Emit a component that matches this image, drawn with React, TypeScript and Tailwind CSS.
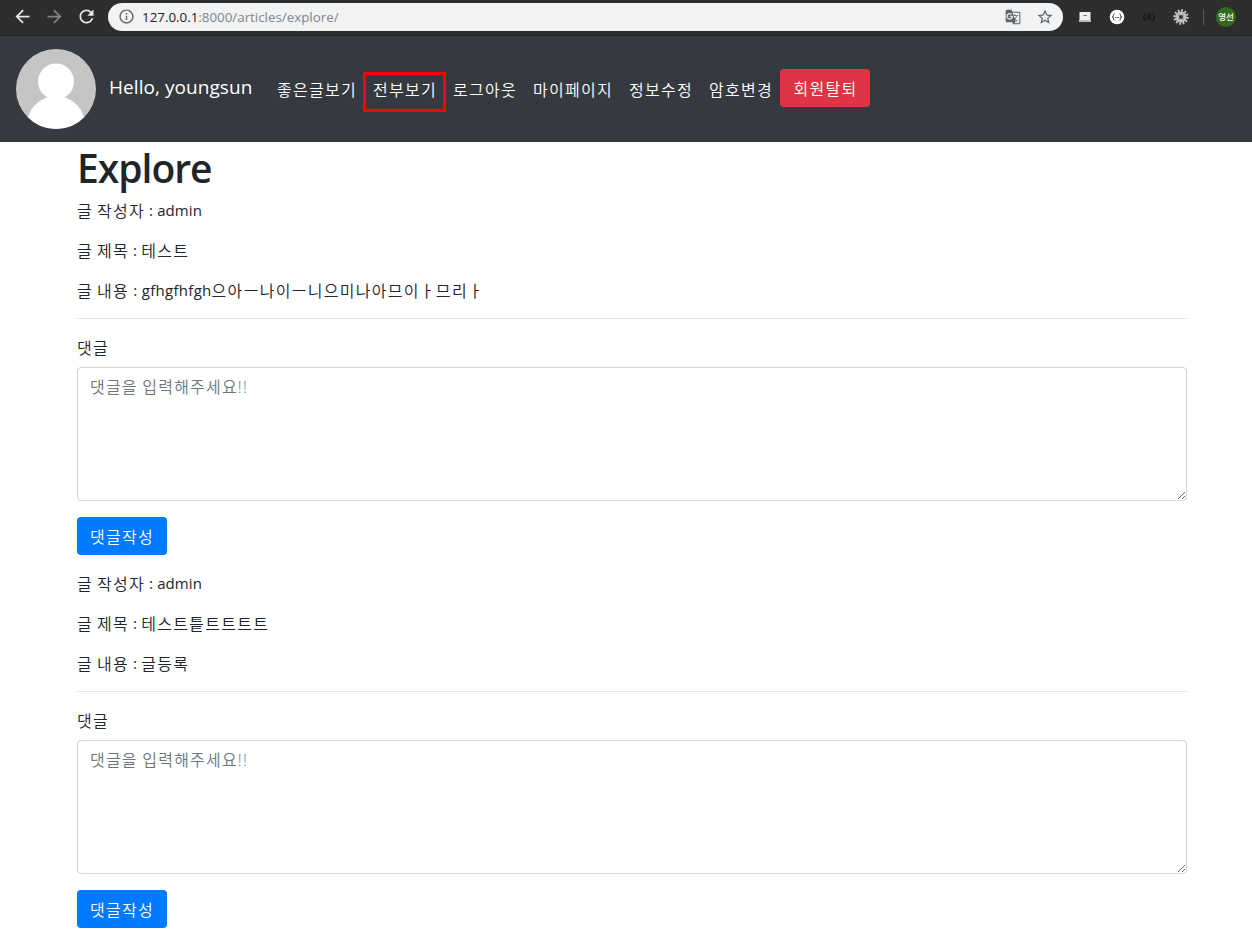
import React from "react";
import { MdArrowBack, MdArrowForward, MdRefresh, MdInfoOutline, MdStarBorder, MdGTranslate } from "react-icons/md";

const HANGUL = /([\u3131-\u318e\uac00-\ud7a3]+)/;

function Mixed({ text }: { text: string }) {
  return (
    <>
      {text.split(HANGUL).map((part, i) =>
        HANGUL.test(part) ? (
          <span key={i} className="relative top-px font-[350] tracking-[1.3px]">{part}</span>
        ) : (
          <span key={i} className={part.length > 8 ? "whitespace-pre text-[15px] tracking-[0.3px]" : "whitespace-pre text-[15px] tracking-[0.1px]"}>{part}</span>
        ),
      )}
    </>
  );
}

function BrowserBar() {
  return (
    <div className="flex h-9 items-center border-b border-[#202020] bg-[#2d2d2d] pb-0.5">
      <MdArrowBack className="ml-[11.5px] size-[21px] text-[#e6e6e6]" />
      <MdArrowForward className="ml-[11px] size-[21px] text-[#858585]" />
      <MdRefresh className="ml-[11px] size-[21px] text-[#e6e6e6]" />
      <div className="ml-[11.5px] flex h-7 w-[955px] items-center rounded-full bg-[#f1f3f4] px-2.5">
        <MdInfoOutline className="size-[17px] text-[#5f6368]" />
        <div className="ml-[7px] text-[13.35px] leading-5 text-[#80868b]">
          <span className="text-[#202124]">127.0.0.1</span>:8000/articles/explore/
        </div>
        <MdGTranslate className="ml-auto size-4 text-[#5f6368]" />
        <MdStarBorder className="-mr-px ml-[15px] size-[18px] text-[#5f6368]" />
      </div>
      <svg className="ml-4 h-3 w-3" viewBox="0 0 12 12">
        <path fill="#f0f0f0" d="M.5 1h11v8H.5z" />
        <path fill="#bcbcbc" d="M0 9h12v2H0z" />
        <path stroke="#444" d="M4.5 4.5h1M6 4.5h1.5" />
      </svg>
      <svg className="ml-[18px] size-4" viewBox="0 0 16 16">
        <circle cx="8" cy="8" r="7.3" fill="#fff" />
        <path d="M5.5 5Q4.3 5 4.5 6.5 4.5 8 3.2 8 4.5 8 4.5 9.5 4.3 11 5.5 11M10.5 5Q11.7 5 11.5 6.5 11.5 8 12.8 8 11.5 8 11.5 9.5 11.7 11 10.5 11M6 8.5h1M7.6 8.5h1M9.2 8.5h1" fill="none" stroke="#333" />
      </svg>
      <svg className="ml-4 size-4" viewBox="0 0 16 16">
        <path d="M4.5 4.5Q3.2 4.5 3.2 6.5 3.2 8 2 8 3.2 8 3.2 9.5 3.2 11.5 4.5 11.5M11.5 4.5Q12.8 4.5 12.8 6.5 12.8 8 14 8 12.8 8 12.8 9.5 12.8 11.5 11.5 11.5M5.7 6h4.6M5.7 8h4.6M5.7 10h4.6" fill="none" stroke="#111" strokeWidth="1.2" />
      </svg>
      <svg className="ml-4 size-4" viewBox="0 0 16 16">
        <circle cx="8" cy="8" r="6.6" fill="none" stroke="#c7c7c7" strokeWidth="2.2" strokeDasharray="1.75 1.7" />
        <circle cx="8" cy="8" r="4.4" fill="none" stroke="#bfbfbf" strokeWidth="2.8" />
        <circle cx="8" cy="8" r="2.6" fill="#3a3a3a" stroke="#eee" strokeWidth=".8" />
      </svg>
      <div className="ml-3.5 h-4 w-px bg-[#5c5c5c]" />
      <div className="ml-3 flex size-5 items-center justify-center rounded-full bg-[#33691e] pt-0.5 text-[8.5px] font-medium leading-none text-white">
        영선
      </div>
    </div>
  );
}

const accountLinks = ["로그아웃", "마이페이지", "정보수정", "암호변경"];

function Navbar() {
  return (
    <nav className="flex h-[106px] items-center bg-[#343a40] px-4 text-white">
      <svg className="size-20 shrink-0" viewBox="0 0 80 80">
        <clipPath id="avatar"><circle cx="40" cy="40" r="40" /></clipPath>
        <g clipPath="url(#avatar)">
          <path fill="#c5c5c5" d="M0 0h80v80H0z" />
          <circle cx="40" cy="32.5" r="18" fill="#fff" />
          <circle cx="40" cy="76" r="29" fill="#fff" />
        </g>
      </svg>
      <span className="ml-[13px] w-[168px] pb-1 text-[19px] leading-[30px] tracking-[0.06px] whitespace-nowrap">Hello, youngsun</span>
      <a className="w-[79px] whitespace-nowrap pt-0.5 font-[350] tracking-[1.28px]">좋은글보기</a>
      <a className="ml-[7px] mt-[5px] flex h-10 w-[83px] items-center border-3 border-[#ff0000] pb-[3px] pl-[7px] font-[350] tracking-[1.28px] whitespace-nowrap">전부보기</a>
      <div className="ml-[7px] flex gap-4 pt-0.5">
        {accountLinks.map((t) => (
          <a key={t} className="whitespace-nowrap font-[350] tracking-[1.28px]">{t}</a>
        ))}
      </div>
      <button className="mb-0.5 ml-[7px] h-[38px] w-[90px] rounded bg-[#dc3545] pl-px pt-0.5 font-[350] tracking-[1.28px]">회원탈퇴</button>
    </nav>
  );
}

function Article({ title, content }: { title: string; content: string }) {
  return (
    <article className="mb-4">
      <div className="flex flex-col gap-4">
        <p><Mixed text="글 작성자 : admin" /></p>
        <p><Mixed text={`글 제목 : ${title}`} /></p>
        <p><Mixed text={`글 내용 : ${content}`} /></p>
      </div>
      <hr className="my-4 border-[#e5e5e5]" />
      <label className="mb-2 block"><Mixed text="댓글" /></label>
      <textarea
        placeholder="댓글을 입력해주세요!!"
        className="block h-[134px] w-full resize-y rounded border border-[#ced4da] bg-white px-3 pb-1.5 pt-[7px] font-[350] tracking-[1.2px] [word-spacing:-0.8px] placeholder:text-[#6c757d]"
      />
      <button className="mt-4 h-[38px] w-[90px] rounded bg-[#007bff] pt-0.5 font-[350] tracking-[1.28px] text-white">댓글작성</button>
    </article>
  );
}

export default function App() {
  return (
    <div className="h-[941px] overflow-hidden bg-white font-['Open_Sans','Noto_Sans_CJK_KR',sans-serif] text-base leading-6 text-[#212529]">
      <BrowserBar />
      <Navbar />
      <main className="ml-[77px] w-[1110px]">
        <h1 className="mb-1.5 pt-0.5 text-[39px] font-semibold leading-[48px] tracking-[-1px]">Explore</h1>
        <Article title="테스트" content="gfhgfhfgh으아ㅡ나이ㅡ니으미나아므이ㅏ므리ㅏ" />
        <Article title="테스트틑트트트트" content="글등록" />
      </main>
    </div>
  );
}
